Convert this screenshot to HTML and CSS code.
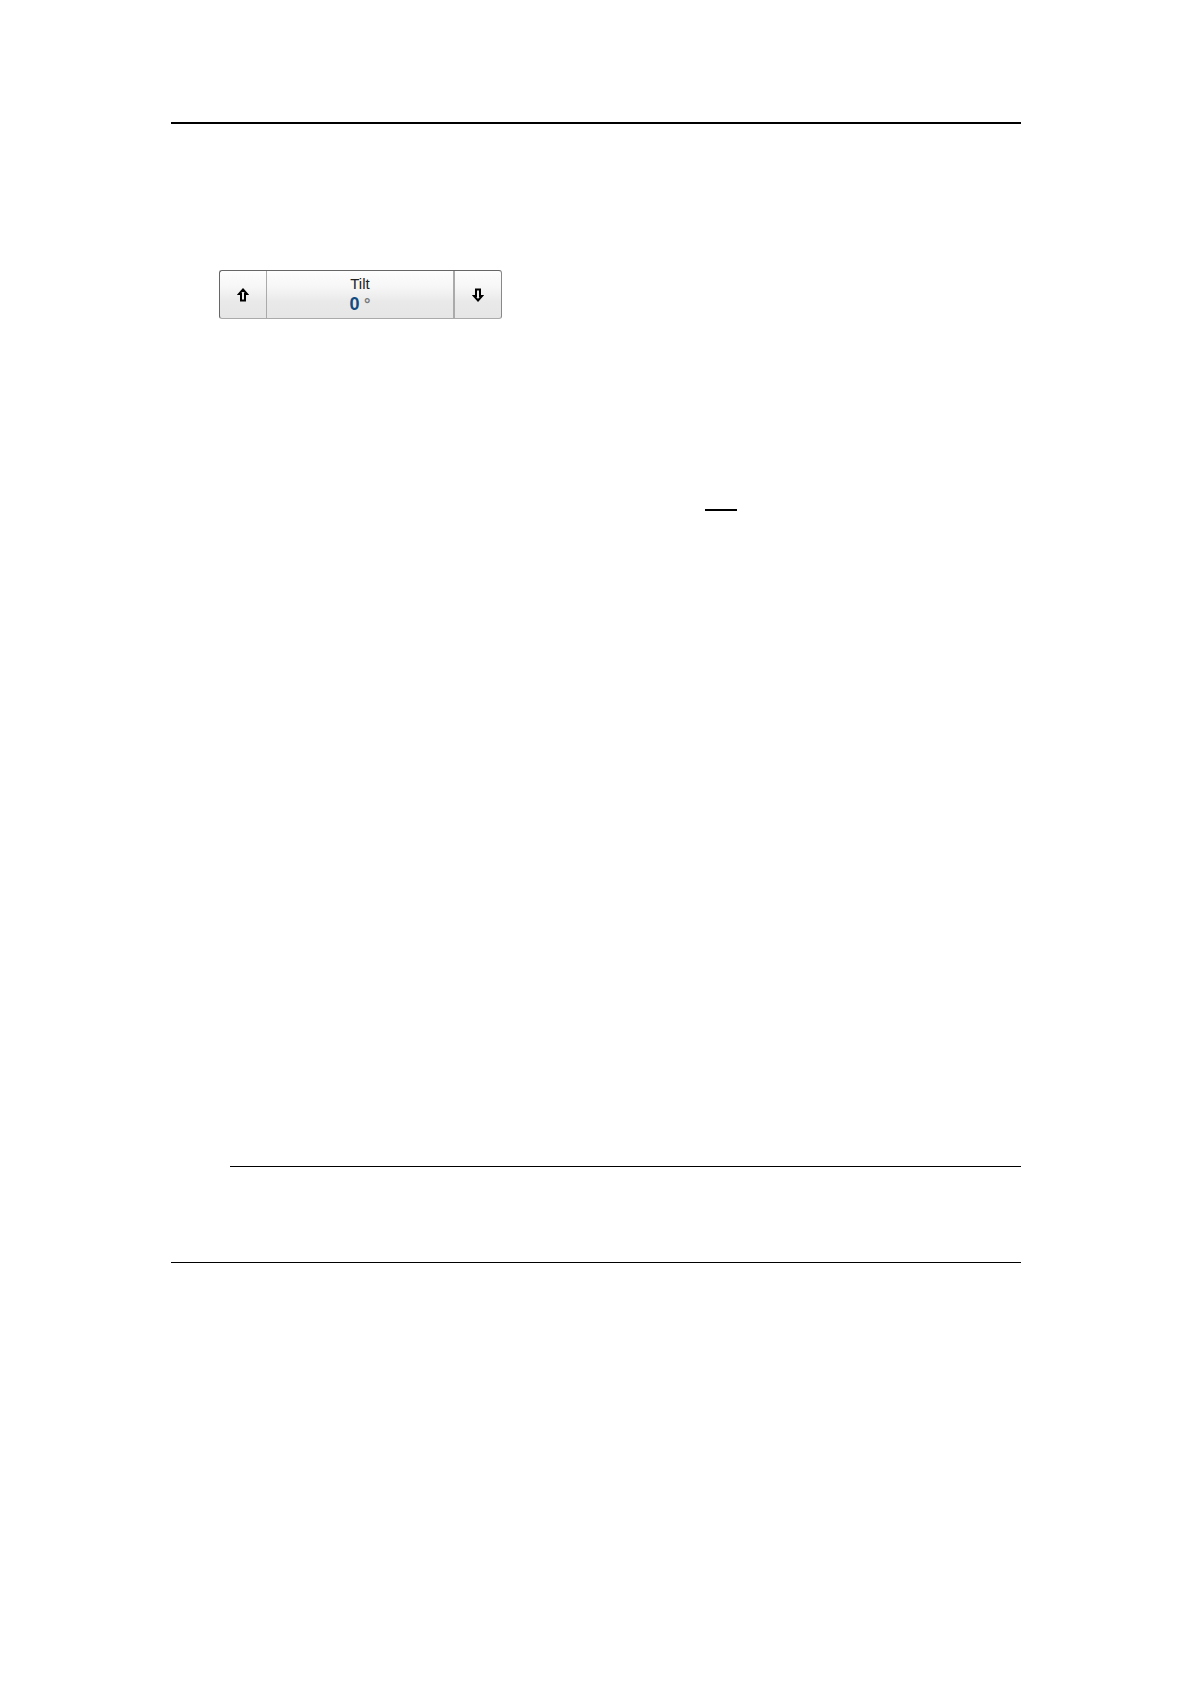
FILE: index.html
```
<!DOCTYPE html>
<html lang="en">
<head>
    <meta charset="UTF-8">
    <meta name="viewport" content="width=device-width, initial-scale=1.0">
    <title>Tilt</title>
    <link rel="stylesheet" href="styles.css">
</head>
<body>
    <main class="page">
        <hr class="rule rule-thick">
        <div class="tilt-control" role="group" aria-label="Tilt">
            <button type="button" class="step" aria-label="Increase tilt">
                <svg class="arrow" viewBox="0 0 12 14" aria-hidden="true">
                    <path class="arrow-shape" d="M6 1.5 L10 6 H8 V12.5 H4 V6 H2 Z"/>
                </svg>
            </button>
            <button type="button" class="value">
                <span class="name">Tilt</span>
                <span class="reading"><b class="number">0</b> <b class="unit">°</b></span>
            </button>
            <button type="button" class="step" aria-label="Decrease tilt">
                <svg class="arrow" viewBox="0 0 12 14" aria-hidden="true">
                    <path class="arrow-shape" d="M6 12.5 L10 8 H8 V1.5 H4 V8 H2 Z"/>
                </svg>
            </button>
        </div>
        <hr class="rule rule-thick rule-short">
        <hr class="rule rule-indent">
        <hr class="rule">
    </main>
</body>
</html>
```

FILE: styles.css
```
* {
    box-sizing: border-box;
}
body {
    margin: 0;
    background-color: #fff;
    font-family: "Liberation Sans", Arial, sans-serif;
}
.page {
    display: flex;
    flex-direction: column;
    min-height: 100vh;
    padding: 122px 170px 0 171px;
}
.rule {
    width: 100%;
    height: 1px;
    margin: 0;
    border: 0;
    background-color: #000;
}
.rule-thick {
    height: 2px;
}
.rule-short {
    width: 32px;
    margin: 190px 284px 655px auto;
}
.rule-indent {
    width: auto;
    margin: 0 0 95px 59px;
}
.tilt-control {
    display: flex;
    width: 283px;
    height: 49px;
    margin: 146px 0 0 48px;
    border: 1px solid #666;
    border-right-color: #888;
    border-bottom-color: #aaa;
    border-radius: 3px;
    background: linear-gradient(#fdfdfd, #f6f6f6 35%, #e9e9e9 65%, #e6e6e6);
}
.step,
.value {
    display: flex;
    align-items: center;
    justify-content: center;
    padding: 0;
    border: 0;
    background: none;
    font-family: inherit;
}
.step {
    width: 46px;
}
.value {
    flex: 1;
    flex-direction: column;
    gap: 1px;
    border-left: 1px solid #aaa;
    border-right: 2px solid #aaa;
}
.name {
    color: #222;
    font-size: 15px;
    line-height: 19px;
}
.reading {
    font-size: 16px;
    line-height: 20px;
}
.number {
    color: #134a80;
    font-size: 18px;
}
.unit {
    color: #777;
}
.arrow {
    width: 12px;
    height: 14px;
}
.arrow-shape {
    fill: #eee;
    stroke: #000;
    stroke-width: 2;
}
```
